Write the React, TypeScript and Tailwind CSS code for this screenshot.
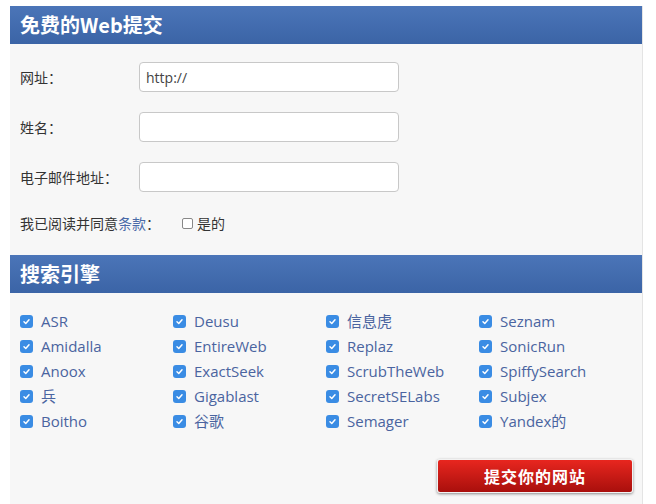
import React from "react";

const cjk = { fontFamily: '"Noto Sans CJK SC", "Noto Sans", sans-serif' };
const latin = { fontFamily: '"Open Sans", "Noto Sans CJK SC", sans-serif' };

const engines = [
  "ASR", "Deusu", "信息虎", "Seznam",
  "Amidalla", "EntireWeb", "Replaz", "SonicRun",
  "Anoox", "ExactSeek", "ScrubTheWeb", "SpiffySearch",
  "兵", "Gigablast", "SecretSELabs", "Subjex",
  "Boitho", "谷歌", "Semager", "Yandex的",
];

function Check() {
  return (
    <span className="flex h-[13px] w-[13px] shrink-0 items-center justify-center rounded-[3px] bg-[#3a8ce4]">
      <svg width="9" height="9" viewBox="0 0 10 10">
        <path d="M2.2 5.2 L4.2 7.2 L7.8 3" fill="none" stroke="white" strokeWidth="1.6" strokeLinecap="round" strokeLinejoin="round" />
      </svg>
    </span>
  );
}

function Header({ children }: { children: React.ReactNode }) {
  return (
    <div
      className="flex h-[38px] items-center bg-gradient-to-b from-[#4b75b8] to-[#3b64a6] pl-[10px] text-[20px] font-bold text-white"
      style={cjk}
    >
      {children}
    </div>
  );
}

function Row({ label }: { label: string }) {
  return (
    <div className="flex h-[30px] items-center">
      <div className="w-[119px] text-[14px] text-[#333]" style={cjk}>{label}</div>
      <div className="h-[30px] w-[260px] rounded-[4px] border border-[#c8c8c8] bg-white" />
    </div>
  );
}

export default function App() {
  return (
    <div className="min-h-[504px] bg-white pl-[10px] pr-[13px] pt-[6px]">
      <div className="min-h-[498px] border-r border-[#e4e4e4] bg-[#f7f7f7]">
        <Header>免费的Web提交</Header>
        <div className="flex flex-col gap-[20px] px-[10px] pt-[18px]">
          <div className="flex h-[30px] items-center">
            <div className="w-[119px] text-[14px] text-[#333]" style={cjk}>网址：</div>
            <div className="flex h-[30px] w-[260px] items-center rounded-[4px] border border-[#c8c8c8] bg-white pl-[6px] text-[14px] text-[#444]" style={latin}>
              http://
            </div>
          </div>
          <Row label="姓名：" />
          <Row label="电子邮件地址：" />
        </div>
        <div className="mt-[21px] flex h-[20px] items-center px-[10px] text-[14px] text-[#333]" style={cjk}>
          <span>我已阅读并同意</span>
          <span className="text-[#4a6aa8]">条款</span>
          <span>：</span>
          <span className="ml-[22px] h-[11px] w-[11px] rounded-[2px] border border-[#888] bg-white" />
          <span className="ml-[4px]">是的</span>
        </div>
        <div className="mt-[22px]">
          <Header>搜索引擎</Header>
        </div>
        <div className="grid grid-cols-4 px-[10px] pt-[16px]">
          {engines.map((e) => (
            <div key={e} className="flex h-[25px] items-center gap-[8px]">
              <Check />
              <span className="text-[15px] text-[#4a64a0]" style={latin}>{e}</span>
            </div>
          ))}
        </div>
        <div className="flex justify-end pr-[9px] pt-[25px]">
          <div
            className="flex h-[34px] w-[196px] items-center justify-center rounded-[3px] border border-[#f2f2f2] bg-gradient-to-b from-[#e8261f] to-[#a90f0c] text-[16px] font-bold tracking-[1px] text-white shadow-[0_1px_3px_rgba(0,0,0,0.45)]"
            style={cjk}
          >
            提交你的网站
          </div>
        </div>
      </div>
    </div>
  );
}
